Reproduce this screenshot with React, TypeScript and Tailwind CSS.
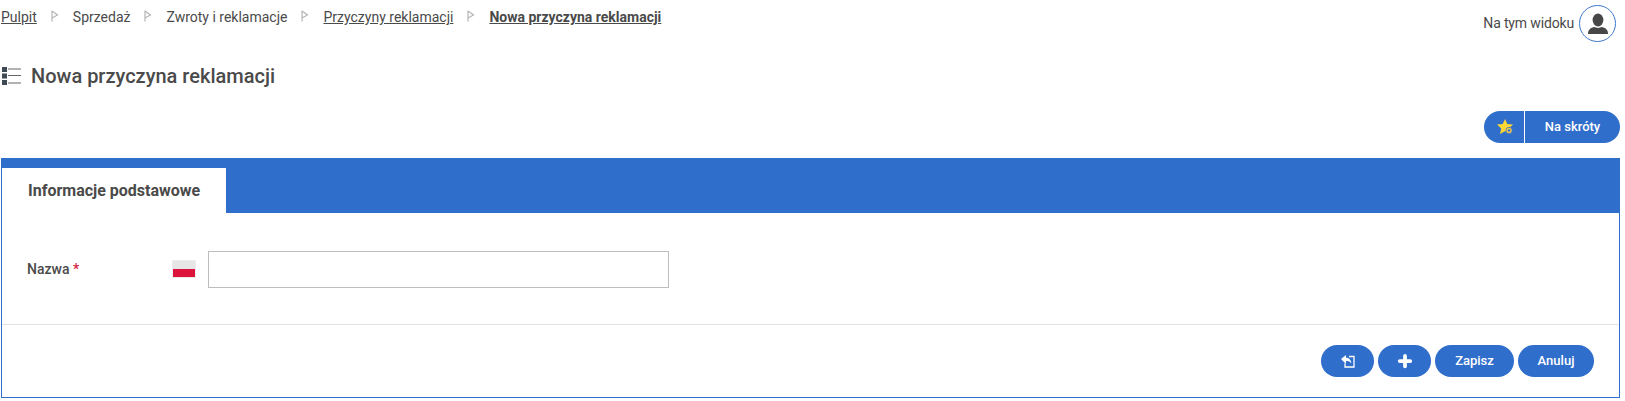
import React from 'react';
import { Plus } from 'lucide-react';

const crumbs = [
  { label: 'Sprzedaż', link: false },
  { label: 'Zwroty i reklamacje', link: false },
  { label: 'Przyczyny reklamacji', link: true },
];

const Sep = () => (
  <svg width="8" height="12" viewBox="0 0 8 12" className="mx-[14px] shrink-0 -mt-[2px]">
    <path d="M1 .5v11M1 1l5.500 4L1 8" fill="none" stroke="#b5b5b5" strokeWidth="1.200" />
  </svg>
);

const ListIcon = () => (
  <svg width="20" height="18" viewBox="0 0 20 18">
    <rect x="1" y="0" width="5" height="5" fill="#3f4a55" />
    <rect x="1" y="6.500" width="5" height="5" fill="#3f4a55" />
    <rect x="1" y="13" width="5" height="5" fill="#3f4a55" />
    <path d="M7 2h13M7 8.500h13M7 16h13" stroke="#666" strokeWidth="1.200" />
  </svg>
);

const UserIcon = () => (
  <svg width="22" height="22" viewBox="0 0 22 22" fill="#474747">
    <ellipse cx="11" cy="7" rx="5.400" ry="6.500" />
    <path d="M1 21c0-4 2-6 6-7l4 1 4-1c4 1 6 3 6 7z" />
  </svg>
);

const StarIcon = () => (
  <svg width="17" height="16" viewBox="0 0 17 16">
    <path d="M8 0l2.300 5 5.700.6-4.200 3.800 1.200 5.600L8 12.200 3 15l1.200-5.600L0 5.600 5.700 5z" fill="#fdd835" />
    <circle cx="12" cy="11.500" r="3.200" fill="#f3c94a" stroke="#3a6fc9" strokeWidth="0.800" />
    <circle cx="12" cy="11.500" r="1.200" fill="#3170c9" />
  </svg>
);

const BackIcon = () => (
  <svg width="14" height="13" viewBox="0 0 14 13" fill="none">
    <path d="M8 1.500h5v10.500H4V8.500" stroke="#fff" strokeWidth="1.300" />
    <path d="M0 4l5-4v2.700c3 0 5 1.800 5.500 5.800C9 6.500 7.500 6 5 6v3z" fill="#fff" />
  </svg>
);

const pill = 'h-8 flex items-center justify-center rounded-full bg-[#306ecb] text-white text-[13px] font-medium';

export default function App() {
  return (
    <div className="w-[1625px] h-[401px] bg-white overflow-hidden text-[#4a4a4a] font-['Roboto',sans-serif]">
      <div className="h-[111px] flex flex-col">
        <div className="flex justify-between pl-[1px] pr-[9px] pt-[5px]">
          <nav className="flex items-center h-[24px] text-[14px] leading-none">
            <a className="underline">Pulpit</a>
            {crumbs.map((c) => (
              <React.Fragment key={c.label}>
                <Sep />
                <span className={c.link ? 'underline' : ''}>{c.label}</span>
              </React.Fragment>
            ))}
            <Sep />
            <span className="font-bold underline">Nowa przyczyna reklamacji</span>
          </nav>
          <div className="flex items-center gap-[5px] text-[14px]">
            <span className="tracking-[-0.15px]">Na tym widoku</span>
            <div className="w-[37px] h-[37px] rounded-full border border-[#3f78cc] flex items-center justify-center">
              <UserIcon />
            </div>
          </div>
        </div>
        <div className="flex items-center gap-[10px] pl-[1px] mt-[24px]">
          <ListIcon />
          <h1 className="text-[20px] font-medium leading-none">Nowa przyczyna reklamacji</h1>
        </div>
      </div>

      <div className="flex justify-end pr-[5px]">
        <div className="h-8 w-[136px] flex rounded-full bg-[#306ecb] text-white text-[13px] font-medium">
          <div className="w-[41px] flex items-center justify-center border-r border-white pl-[3px]">
            <StarIcon />
          </div>
          <div className="flex-1 flex items-center justify-center">Na skróty</div>
        </div>
      </div>

      <div className="mt-[15px] ml-[1px] w-[1619px] h-[240px] border border-[#306ecb] border-t-0 flex flex-col">
        <div className="h-[55px] bg-[#306ecb] pt-[10px] -mx-px px-[1px]">
          <div className="w-[224px] h-[45px] bg-white flex items-center pl-[26px] text-[16px] font-bold">
            Informacje podstawowe
          </div>
        </div>
        <div className="flex items-center h-[111px] pl-[25px] pt-[2px]">
          <label className="w-[145px] text-[14px] font-medium">
            Nazwa <span className="text-[#d81b3c]">*</span>
          </label>
          <div className="w-[24px] h-[18px] flex flex-col border border-[#ececec] -mt-[2px]">
            <div className="flex-1 bg-[#e6e6e6]" />
            <div className="flex-1 bg-[#dc143c]" />
          </div>
          <input className="ml-[12px] w-[461px] h-[37px] border border-[#bdbdbd] bg-white outline-none" />
        </div>
        <div className="flex-1 border-t border-[#e3e3e3] flex justify-end items-start gap-[4px] pt-[20px] pr-[25px]">
          <button className={`${pill} w-[53px]`}><BackIcon /></button>
          <button className={`${pill} w-[53px]`}><Plus size={18} strokeWidth={5} /></button>
          <button className={`${pill} w-[79px]`}>Zapisz</button>
          <button className={`${pill} w-[76px]`}>Anuluj</button>
        </div>
      </div>
    </div>
  );
}
